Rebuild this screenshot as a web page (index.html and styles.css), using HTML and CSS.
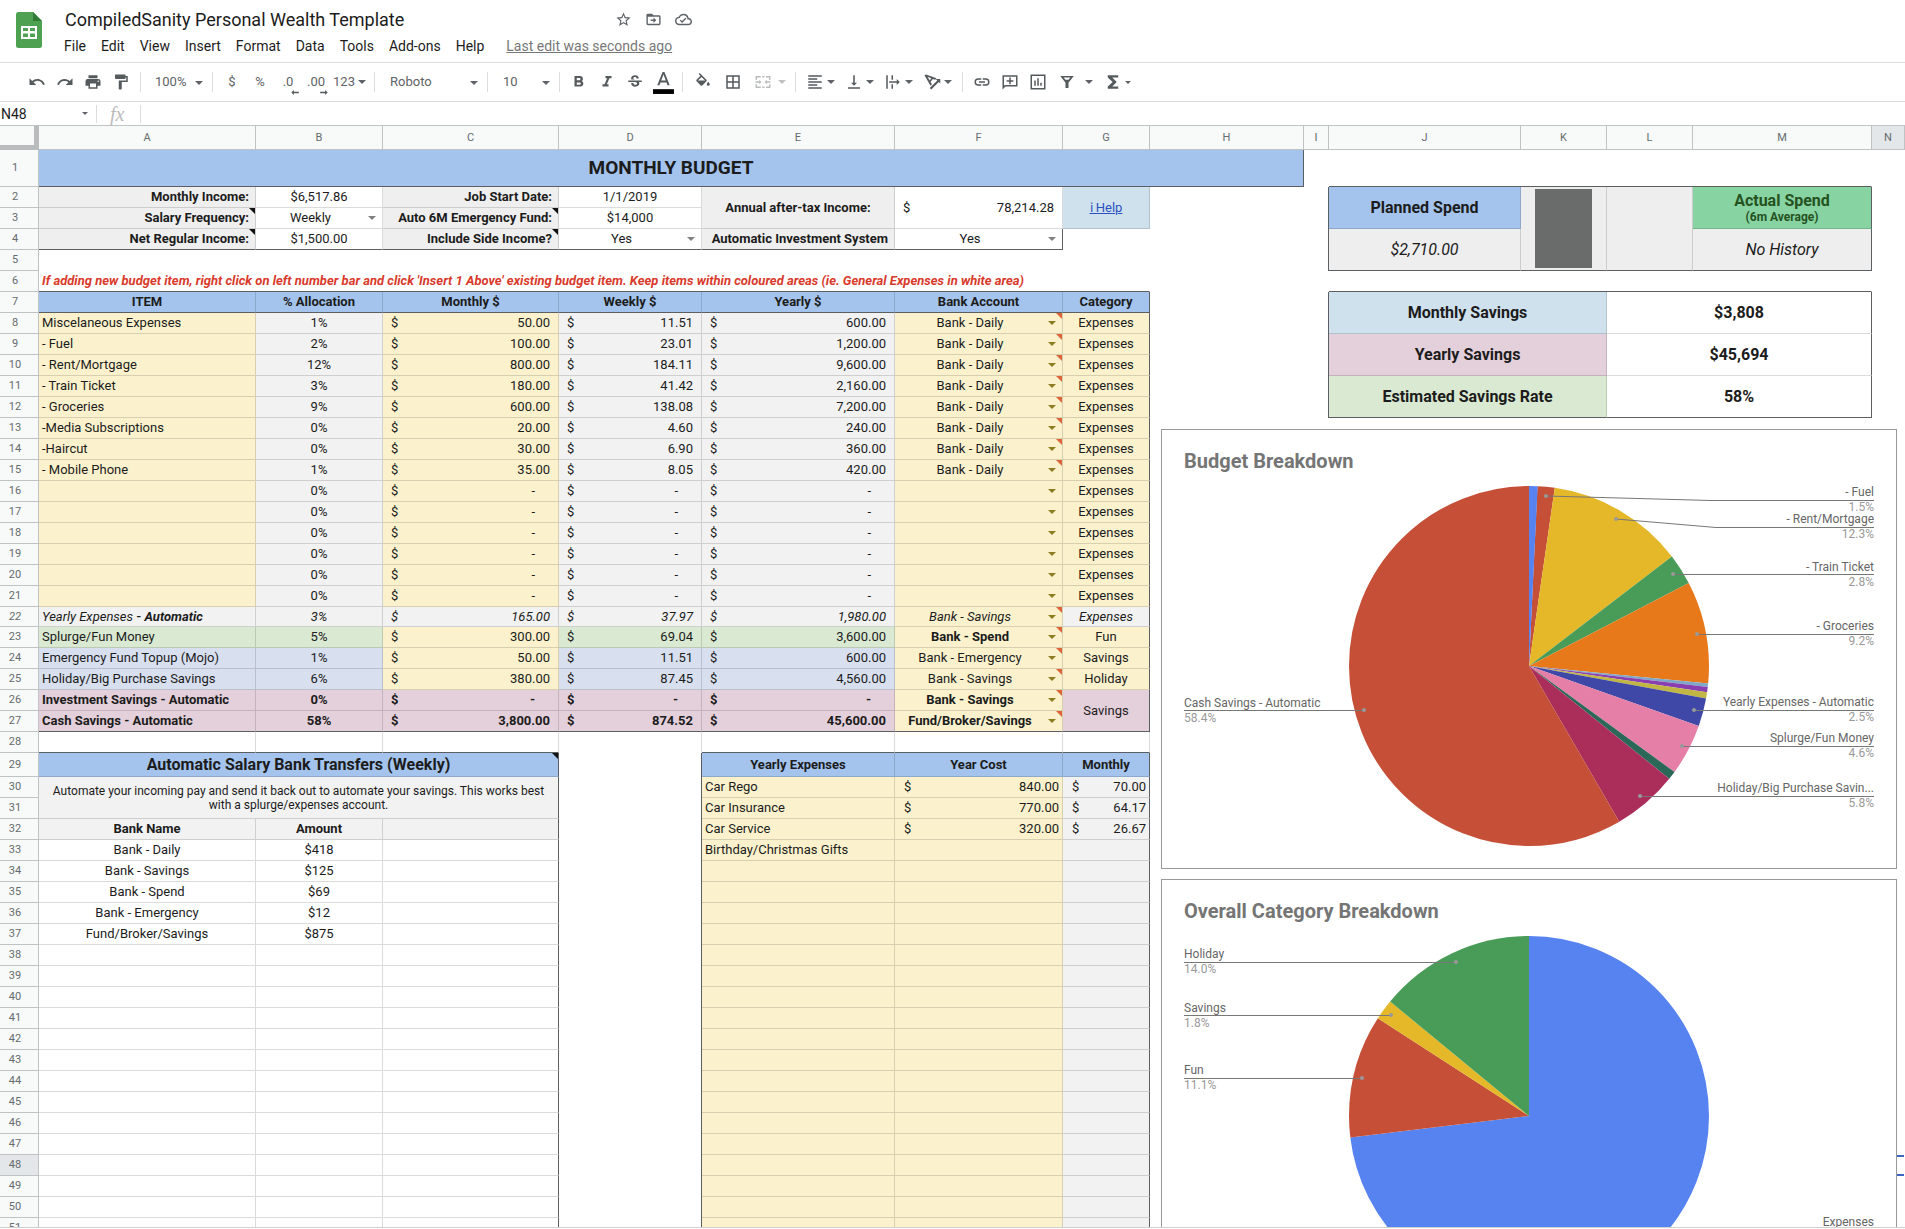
FILE: index.html
```html
<!DOCTYPE html>
<html lang="en">
<head>
<meta charset="utf-8">
<title>CompiledSanity Personal Wealth Template</title>
<link rel="stylesheet" href="styles.css">
</head>
<body>
<header class="top">
  <svg class="logo" viewBox="0 0 26 36" aria-hidden="true"><path fill="#4fa152" d="M2.500 0H17l9 9v24.500a2.500 2.500 0 0 1-2.500 2.500h-21A2.500 2.500 0 0 1 0 33.500v-31A2.500 2.500 0 0 1 2.500 0z"/><path fill="#2f7a35" d="M17 0l9 9h-9z"/><path fill="#fff" d="M5 14h16v13H5z"/><path fill="#4fa152" d="M7 16h5v3H7zM14 16h5v3h-5zM7 21.500h5v3.500H7zM14 21.500h5v3.500h-5z"/></svg>
  <div class="doc">
    <div class="title-row">
      <h1>CompiledSanity Personal Wealth Template</h1>
      <button aria-label="Star"><svg viewBox="0 0 24 24"><path d="M22 9.240l-7.190-.620L12 2 9.190 8.630 2 9.240l5.460 4.730L5.820 21 12 17.270 18.180 21l-1.630-7.030L22 9.240zM12 15.400l-3.760 2.270 1-4.280-3.320-2.880 4.380-.380L12 6.100l1.710 4.040 4.380.380-3.320 2.880 1 4.280L12 15.400z"/></svg></button>
      <button aria-label="Move"><svg viewBox="0 0 24 24"><path d="M20 6h-8l-2-2H4a2 2 0 0 0-2 2v12a2 2 0 0 0 2 2h16a2 2 0 0 0 2-2V8a2 2 0 0 0-2-2zm0 12H4V8h16v10zM12 17l4-4-4-4v3H8v2h4z"/></svg></button>
      <button aria-label="Saved to Drive"><svg viewBox="0 0 24 24"><path d="M19.350 10.040A7.490 7.490 0 0 0 12 4C9.110 4 6.600 5.640 5.350 8.040A5.994 5.994 0 0 0 0 14c0 3.310 2.690 6 6 6h13c2.760 0 5-2.240 5-5 0-2.640-2.050-4.780-4.650-4.960zM19 18H6c-2.210 0-4-1.790-4-4s1.790-4 4-4h.710A5.500 5.500 0 0 1 12 6c3.040 0 5.500 2.460 5.500 5.500v.500H19a3 3 0 0 1 0 6zm-9-3.800l-2-2L6.700 13.500 10 16.800l6-6-1.400-1.400z"/></svg></button>
    </div>
    <nav class="menu">
      <button>File</button><button>Edit</button><button>View</button><button>Insert</button><button>Format</button><button>Data</button><button>Tools</button><button>Add-ons</button><button>Help</button>
      <a href="#history">Last edit was seconds ago</a>
    </nav>
  </div>
</header>

<div class="toolbar" role="toolbar" aria-label="Formatting">
  <button aria-label="Undo"><svg viewBox="0 0 24 24"><path d="M12.500 8c-2.650 0-5.050 1-6.900 2.600L2 7v9h9l-3.620-3.620A7.950 7.950 0 0 1 20.100 16l2.370-.780C21.080 11.030 17.150 8 12.500 8z"/></svg></button>
  <button aria-label="Redo"><svg viewBox="0 0 24 24"><path d="M18.400 10.600A10.440 10.440 0 0 0 1.540 15.220L3.900 16a8 8 0 0 1 12.720-3.620L13 16h9V7l-3.600 3.600z"/></svg></button>
  <button aria-label="Print"><svg viewBox="0 0 24 24"><path d="M19 8H5a3 3 0 0 0-3 3v6h4v4h12v-4h4v-6a3 3 0 0 0-3-3zm-3 11H8v-5h8v5zm3-7a1 1 0 1 1 0-2 1 1 0 0 1 0 2zM18 3H6v4h12V3z"/></svg></button>
  <button aria-label="Paint format"><svg viewBox="0 0 24 24"><path d="M18 4V3a1 1 0 0 0-1-1H5a1 1 0 0 0-1 1v4a1 1 0 0 0 1 1h12a1 1 0 0 0 1-1V6h1v4H9v11a1 1 0 0 0 1 1h2a1 1 0 0 0 1-1v-9h8V4h-3z"/></svg></button>
  <i class="rule"></i>
  <label class="drop zoom"><select aria-label="Zoom"><option>100%</option></select></label>
  <i class="rule flush"></i>
  <button>$</button><button>%</button>
  <button class="dec">.0<svg viewBox="0 0 10 6"><path d="M3 0v2h6v2H3v2L0 3z"/></svg></button>
  <button class="dec">.00<svg viewBox="0 0 10 6"><path d="M7 0v2H1v2h6v2l3-3z"/></svg></button>
  <button class="combo">123<b class="caret"></b></button>
  <i class="rule"></i>
  <label class="drop face"><select aria-label="Font"><option>Roboto</option></select></label>
  <i class="rule none"></i>
  <label class="drop size"><select aria-label="Font size"><option>10</option></select></label>
  <i class="rule flush"></i>
  <button aria-label="Bold"><svg viewBox="0 0 24 24"><path d="M15.600 10.790c.970-.670 1.650-1.770 1.650-2.790 0-2.260-1.750-4-4-4H6v14h8.040c2.090 0 3.710-1.700 3.710-3.790 0-1.520-.860-2.820-2.150-3.420zM9 6.500h3.500a1.500 1.500 0 0 1 0 3H9v-3zm4 9H9v-3h4a1.500 1.500 0 0 1 0 3z"/></svg></button>
  <button aria-label="Italic"><svg viewBox="0 0 24 24"><path d="M10 4v3h2.210l-3.420 8H6v3h8v-3h-2.210l3.420-8H18V4z"/></svg></button>
  <button aria-label="Strikethrough"><svg viewBox="0 0 24 24"><path d="M7.240 8.750a3.500 3.500 0 0 1-.390-1.640C6.850 4.600 9.100 3 12.090 3c2.900 0 5 1.600 5 4.400h-3c0-1.200-.700-2-2.100-2-1.300 0-2.100.600-2.100 1.600 0 .8.600 1.300 1.900 1.750zM21 12v-2H3v2h9.620c1.500.600 2.100 1.100 2.100 2.100 0 1-.800 1.700-2.300 1.700-1.700 0-2.600-.800-2.600-2.400h-3c0 3.200 2.400 4.800 5.500 4.800 3.200 0 5.400-1.500 5.400-4.100 0-.8-.150-1.500-.500-2.100z"/></svg></button>
  <button aria-label="Text color"><svg class="tall" viewBox="0 0 22 24"><path d="M10 1L4.500 15h2.250l1.120-3h6.250l1.120 3h2.250L12 1h-2zm-1.380 9L11 3.670 13.380 10H8.620z"/><path fill="#000" d="M0 19h22v5H0z"/></svg></button>
  <i class="rule"></i>
  <button class="wide" aria-label="Fill color"><svg viewBox="0 0 24 24"><path d="M16.560 8.940L7.620 0 6.210 1.410l2.380 2.380-5.150 5.150a1.490 1.490 0 0 0 0 2.120l5.500 5.500c.590.590 1.540.590 2.120 0l5.500-5.500c.590-.580.590-1.530 0-2.120zM5.210 10L10 5.210 14.790 10zM19 11.500s-2 2.170-2 3.500a2 2 0 0 0 4 0c0-1.330-2-3.500-2-3.500z"/></svg></button>
  <button class="wide" aria-label="Borders"><svg viewBox="0 0 24 24"><path d="M3 3v18h18V3H3zm8 16H5v-6h6v6zm0-8H5V5h6v6zm8 8h-6v-6h6v6zm0-8h-6V5h6v6z"/></svg></button>
  <button class="wide off" aria-label="Merge cells" disabled><svg viewBox="0 0 24 24"><path d="M2 4h7v2H4v3H2zM11 4h3v2h-3zM16 4h6v5h-2V6h-4zM2 15h2v3h5v2H2zM11 18h3v2h-3zM20 15h2v5h-6v-2h4zM2 11h5V9l3 3-3 3v-2H2zM22 11h-5V9l-3 3 3 3v-2h5z"/></svg></button><b class="caret off"></b>
  <i class="rule gap"></i>
  <button class="combo" aria-label="Horizontal align"><svg viewBox="0 0 24 24"><path d="M15 15H3v2h12v-2zm0-8H3v2h12V7zM3 13h18v-2H3v2zm0 8h18v-2H3v2zM3 3v2h18V3H3z"/></svg><b class="caret"></b></button>
  <button class="combo" aria-label="Vertical align"><svg viewBox="0 0 24 24"><path d="M16 13h-3V3h-2v10H8l4 4 4-4zM4 19v2h16v-2H4z"/></svg><b class="caret"></b></button>
  <button class="combo" aria-label="Text wrapping"><svg viewBox="0 0 24 24"><path d="M3 3h2v18H3zM10 3h2v6h-2zM10 15h2v6h-2zM7 11h10V8l4 4-4 4v-3H7z"/></svg><b class="caret"></b></button>
  <button class="combo" aria-label="Text rotation"><svg viewBox="0 0 24 24"><path d="M2 3l2-1 14 5-2 2-3-1-3 4 2 3-2 2zm4 2l3 5 2-3zM9 20L19 10l-2-2h6v6l-2-2-10 10z"/></svg><b class="caret"></b></button>
  <i class="rule"></i>
  <button aria-label="Insert link"><svg viewBox="0 0 24 24"><path d="M3.900 12A3.100 3.100 0 0 1 7 8.900h4V7H7a5 5 0 0 0 0 10h4v-1.900H7A3.100 3.100 0 0 1 3.900 12zM8 13h8v-2H8v2zm9-6h-4v1.900h4a3.100 3.100 0 0 1 0 6.200h-4V17h4a5 5 0 0 0 0-10z"/></svg></button>
  <button aria-label="Insert comment"><svg viewBox="0 0 24 24"><path d="M22 3H2v19l4-4h16zm-2 13H5l-1 1V5h16zM11 6h2v3.500h3.500v2H13V15h-2v-3.500H7.500v-2H11z"/></svg></button>
  <button aria-label="Insert chart"><svg viewBox="0 0 24 24"><path d="M2 2v20h20V2zm18 18H4V4h16zM7 10h2v7H7zM11 7h2v10h-2zM15 13h2v4h-2z"/></svg></button>
  <button class="combo far" aria-label="Filter"><svg viewBox="0 0 24 24"><path d="M3 4h18l-7 9v7h-4v-7zm4.500 2l2.500 3h4l2.500-3z"/></svg><b class="caret"></b></button>
  <button class="combo" aria-label="Functions"><svg viewBox="0 0 24 24"><path d="M19 3H5v3l6.500 6L5 18v3h14v-3h-8l6-6-6-6h8z"/></svg><b class="caret small"></b></button>
</div>

<div class="formula">
  <input class="name" aria-label="Name box" value="N48"><b class="caret small"></b>
  <i class="rule flush"></i><span class="fx">fx</span><i class="rule flush"></i>
  <input class="entry" aria-label="Formula">
</div>

<main class="sheet">
<table class="grid">
<colgroup><col class="w-head"><col class="w-a"><col class="w-b"><col class="w-c"><col class="w-d"><col class="w-e"><col class="w-f"><col class="w-g"><col class="w-h"><col class="w-i"><col class="w-j"><col class="w-k"><col class="w-k"><col class="w-m"><col></colgroup>
<thead><tr><th class="corner"></th><th>A</th><th>B</th><th>C</th><th>D</th><th>E</th><th>F</th><th>G</th><th>H</th><th>I</th><th>J</th><th>K</th><th>L</th><th>M</th><th class="on">N</th></tr></thead>
<tbody>
<tr class="r1"><th>1</th><td colspan="8" class="head big db dr">MONTHLY BUDGET</td><td class="n"></td><td colspan="4" class="n db"></td><td class="n"></td></tr>
<tr><th>2</th><td class="lab">Monthly Income:</td><td>$6,517.86</td><td class="lab">Job Start Date:</td><td>1/1/2019</td><td rowspan="2" class="lab mid">Annual after-tax Income:</td><td rowspan="2" class="num"><span>$</span>78,214.28</td><td rowspan="2" class="sky"><a href="#help">ℹ Help</a></td><td colspan="2" class="n dr"></td><td rowspan="2" class="head stat">Planned Spend</td><td rowspan="4" class="ash db"><div class="bar"></div></td><td rowspan="4" class="ash db"></td><td rowspan="2" class="mint stat dr">Actual Spend<small>(6m Average)</small></td><td class="n"></td></tr>
<tr><th>3</th><td class="lab note">Salary Frequency:</td><td class="pick"><select aria-label="Salary frequency"><option>Weekly</option></select></td><td class="lab note">Auto 6M Emergency Fund:</td><td>$14,000</td><td colspan="2" class="n dr"></td><td class="n"></td></tr>
<tr><th>4</th><td class="lab note db">Net Regular Income:</td><td class="db">$1,500.00</td><td class="lab note db">Include Side Income?</td><td class="pick db"><select aria-label="Include side income"><option>Yes</option></select></td><td class="lab db">Automatic Investment System</td><td class="pick db dr"><select aria-label="Automatic investment system"><option>Yes</option></select></td><td class="n"></td><td colspan="2" class="n dr"></td><td rowspan="2" class="ash val db">$2,710.00</td><td rowspan="2" class="ash val db dr">No History</td><td class="n"></td></tr>
<tr><th>5</th><td colspan="7" class="n"></td><td colspan="2" class="n dr"></td><td class="n"></td></tr>
<tr><th>6</th><td colspan="7" class="n warn db">If adding new budget item, right click on left number bar and click 'Insert 1 Above' existing budget item. Keep items within coloured areas (ie. General Expenses in white area)</td><td colspan="2" class="n"></td><td colspan="4" class="n db"></td><td class="n"></td></tr>
<tr class="titles"><th>7</th><td>ITEM</td><td>% Allocation</td><td>Monthly $</td><td>Weekly $</td><td>Yearly $</td><td>Bank Account</td><td class="dr">Category</td><td colspan="2" class="n dr"></td><td colspan="2" rowspan="2" class="sky stat">Monthly Savings</td><td colspan="2" rowspan="2" class="stat dr">$3,808</td><td class="n"></td></tr>
<tr><th>8</th><td class="y l">Miscelaneous Expenses</td><td class="g">1%</td><td class="y num"><span>$</span>50.00</td><td class="g num"><span>$</span>11.51</td><td class="g num"><span>$</span>600.00</td><td class="y pick flag"><select aria-label="Bank account"><option>Bank - Daily</option></select></td><td class="y dr">Expenses</td><td colspan="2" class="n dr"></td><td class="n"></td></tr>
<tr><th>9</th><td class="y l">- Fuel</td><td class="g">2%</td><td class="y num"><span>$</span>100.00</td><td class="g num"><span>$</span>23.01</td><td class="g num"><span>$</span>1,200.00</td><td class="y pick flag"><select aria-label="Bank account"><option>Bank - Daily</option></select></td><td class="y dr">Expenses</td><td colspan="2" class="n dr"></td><td colspan="2" rowspan="2" class="pk stat">Yearly Savings</td><td colspan="2" rowspan="2" class="stat dr">$45,694</td><td class="n"></td></tr>
<tr><th>10</th><td class="y l">- Rent/Mortgage</td><td class="g">12%</td><td class="y num"><span>$</span>800.00</td><td class="g num"><span>$</span>184.11</td><td class="g num"><span>$</span>9,600.00</td><td class="y pick flag"><select aria-label="Bank account"><option>Bank - Daily</option></select></td><td class="y dr">Expenses</td><td colspan="2" class="n dr"></td><td class="n"></td></tr>
<tr><th>11</th><td class="y l">- Train Ticket</td><td class="g">3%</td><td class="y num"><span>$</span>180.00</td><td class="g num"><span>$</span>41.42</td><td class="g num"><span>$</span>2,160.00</td><td class="y pick flag"><select aria-label="Bank account"><option>Bank - Daily</option></select></td><td class="y dr">Expenses</td><td colspan="2" class="n dr"></td><td colspan="2" rowspan="2" class="gn stat db">Estimated Savings Rate</td><td colspan="2" rowspan="2" class="stat db dr">58%</td><td class="n"></td></tr>
<tr><th>12</th><td class="y l">- Groceries</td><td class="g">9%</td><td class="y num"><span>$</span>600.00</td><td class="g num"><span>$</span>138.08</td><td class="g num"><span>$</span>7,200.00</td><td class="y pick flag"><select aria-label="Bank account"><option>Bank - Daily</option></select></td><td class="y dr">Expenses</td><td colspan="2" class="n dr"></td><td class="n"></td></tr>
<tr><th>13</th><td class="y l">-Media Subscriptions</td><td class="g">0%</td><td class="y num"><span>$</span>20.00</td><td class="g num"><span>$</span>4.60</td><td class="g num"><span>$</span>240.00</td><td class="y pick flag"><select aria-label="Bank account"><option>Bank - Daily</option></select></td><td class="y dr">Expenses</td><td colspan="7" class="n"></td></tr>
<tr><th>14</th><td class="y l">-Haircut</td><td class="g">0%</td><td class="y num"><span>$</span>30.00</td><td class="g num"><span>$</span>6.90</td><td class="g num"><span>$</span>360.00</td><td class="y pick flag"><select aria-label="Bank account"><option>Bank - Daily</option></select></td><td class="y dr">Expenses</td><td colspan="7" class="n"></td></tr>
<tr><th>15</th><td class="y l">- Mobile Phone</td><td class="g">1%</td><td class="y num"><span>$</span>35.00</td><td class="g num"><span>$</span>8.05</td><td class="g num"><span>$</span>420.00</td><td class="y pick flag"><select aria-label="Bank account"><option>Bank - Daily</option></select></td><td class="y dr">Expenses</td><td colspan="7" class="n"></td></tr>
<tr><th>16</th><td class="y"></td><td class="g">0%</td><td class="y num nil"><span>$</span>-</td><td class="g num nil"><span>$</span>-</td><td class="g num nil"><span>$</span>-</td><td class="y pick"><select aria-label="Bank account"><option></option></select></td><td class="y dr">Expenses</td><td colspan="7" class="n"></td></tr>
<tr><th>17</th><td class="y"></td><td class="g">0%</td><td class="y num nil"><span>$</span>-</td><td class="g num nil"><span>$</span>-</td><td class="g num nil"><span>$</span>-</td><td class="y pick"><select aria-label="Bank account"><option></option></select></td><td class="y dr">Expenses</td><td colspan="7" class="n"></td></tr>
<tr><th>18</th><td class="y"></td><td class="g">0%</td><td class="y num nil"><span>$</span>-</td><td class="g num nil"><span>$</span>-</td><td class="g num nil"><span>$</span>-</td><td class="y pick"><select aria-label="Bank account"><option></option></select></td><td class="y dr">Expenses</td><td colspan="7" class="n"></td></tr>
<tr><th>19</th><td class="y"></td><td class="g">0%</td><td class="y num nil"><span>$</span>-</td><td class="g num nil"><span>$</span>-</td><td class="g num nil"><span>$</span>-</td><td class="y pick"><select aria-label="Bank account"><option></option></select></td><td class="y dr">Expenses</td><td colspan="7" class="n"></td></tr>
<tr><th>20</th><td class="y"></td><td class="g">0%</td><td class="y num nil"><span>$</span>-</td><td class="g num nil"><span>$</span>-</td><td class="g num nil"><span>$</span>-</td><td class="y pick"><select aria-label="Bank account"><option></option></select></td><td class="y dr">Expenses</td><td colspan="7" class="n"></td></tr>
<tr><th>21</th><td class="y"></td><td class="g">0%</td><td class="y num nil"><span>$</span>-</td><td class="g num nil"><span>$</span>-</td><td class="g num nil"><span>$</span>-</td><td class="y pick"><select aria-label="Bank account"><option></option></select></td><td class="y dr">Expenses</td><td colspan="7" class="n"></td></tr>
<tr class="r22"><th>22</th><td class="g l">Yearly Expenses <b>- Automatic</b></td><td class="g">3%</td><td class="g num"><span>$</span>165.00</td><td class="g num"><span>$</span>37.97</td><td class="g num"><span>$</span>1,980.00</td><td class="y pick flag"><select aria-label="Bank account"><option>Bank - Savings</option></select></td><td class="g dr">Expenses</td><td colspan="7" class="n"></td></tr>
<tr><th>23</th><td class="gn l">Splurge/Fun Money</td><td class="gn">5%</td><td class="y num"><span>$</span>300.00</td><td class="gn num"><span>$</span>69.04</td><td class="gn num"><span>$</span>3,600.00</td><td class="y pick flag bold"><select aria-label="Bank account"><option>Bank - Spend</option></select></td><td class="y dr">Fun</td><td colspan="7" class="n"></td></tr>
<tr><th>24</th><td class="bl l">Emergency Fund Topup (Mojo)</td><td class="bl">1%</td><td class="y num"><span>$</span>50.00</td><td class="bl num"><span>$</span>11.51</td><td class="bl num"><span>$</span>600.00</td><td class="y pick flag"><select aria-label="Bank account"><option>Bank - Emergency</option></select></td><td class="y dr">Savings</td><td colspan="7" class="n"></td></tr>
<tr><th>25</th><td class="bl l">Holiday/Big Purchase Savings</td><td class="bl">6%</td><td class="y num"><span>$</span>380.00</td><td class="bl num"><span>$</span>87.45</td><td class="bl num"><span>$</span>4,560.00</td><td class="y pick flag"><select aria-label="Bank account"><option>Bank - Savings</option></select></td><td class="y dr">Holiday</td><td colspan="7" class="n"></td></tr>
<tr><th>26</th><td class="pk l bold">Investment Savings - Automatic</td><td class="pk bold">0%</td><td class="pk num nil bold"><span>$</span>-</td><td class="pk num nil bold"><span>$</span>-</td><td class="pk num nil bold"><span>$</span>-</td><td class="y pick flag bold"><select aria-label="Bank account"><option>Bank - Savings</option></select></td><td rowspan="2" class="pk db dr">Savings</td><td colspan="7" class="n"></td></tr>
<tr><th>27</th><td class="pk l bold db">Cash Savings - Automatic</td><td class="pk bold db">58%</td><td class="pk num bold db"><span>$</span>3,800.00</td><td class="pk num bold db"><span>$</span>874.52</td><td class="pk num bold db"><span>$</span>45,600.00</td><td class="y pick flag bold db"><select aria-label="Bank account"><option>Fund/Broker/Savings</option></select></td><td colspan="7" class="n"></td></tr>
<tr><th>28</th><td class="db"></td><td class="db"></td><td class="db"></td><td class="open"></td><td class="db"></td><td class="db"></td><td class="db"></td><td colspan="7" class="n"></td></tr>
<tr class="r29"><th>29</th><td colspan="3" class="head note stat dr">Automatic Salary Bank Transfers (Weekly)</td><td class="n dr"></td><td class="head">Yearly Expenses</td><td class="head">Year Cost</td><td class="head dr">Monthly</td><td colspan="7" class="n"></td></tr>
<tr><th>30</th><td colspan="3" rowspan="2" class="g dr info">Automate your incoming pay and send it back out to automate your savings. This works best with a splurge/expenses account.</td><td class="n dr"></td><td class="y l">Car Rego</td><td class="y num sum"><span>$</span>840.00</td><td class="g num sum dr"><span>$</span>70.00</td><td colspan="7" class="n"></td></tr>
<tr><th>31</th><td class="n dr"></td><td class="y l">Car Insurance</td><td class="y num sum"><span>$</span>770.00</td><td class="g num sum dr"><span>$</span>64.17</td><td colspan="7" class="n"></td></tr>
<tr><th>32</th><td class="g bold">Bank Name</td><td class="g bold">Amount</td><td class="g dr"></td><td class="n dr"></td><td class="y l">Car Service</td><td class="y num sum"><span>$</span>320.00</td><td class="g num sum dr"><span>$</span>26.67</td><td colspan="7" class="n"></td></tr>
<tr><th>33</th><td>Bank - Daily</td><td>$418</td><td class="dr"></td><td class="n dr"></td><td class="y l">Birthday/Christmas Gifts</td><td class="y"></td><td class="g dr"></td><td colspan="7" class="n"></td></tr>
<tr><th>34</th><td>Bank - Savings</td><td>$125</td><td class="dr"></td><td class="n dr"></td><td class="y"></td><td class="y"></td><td class="g dr"></td><td colspan="7" class="n"></td></tr>
<tr><th>35</th><td>Bank - Spend</td><td>$69</td><td class="dr"></td><td class="n dr"></td><td class="y"></td><td class="y"></td><td class="g dr"></td><td colspan="7" class="n"></td></tr>
<tr><th>36</th><td>Bank - Emergency</td><td>$12</td><td class="dr"></td><td class="n dr"></td><td class="y"></td><td class="y"></td><td class="g dr"></td><td colspan="7" class="n"></td></tr>
<tr><th>37</th><td>Fund/Broker/Savings</td><td>$875</td><td class="dr"></td><td class="n dr"></td><td class="y"></td><td class="y"></td><td class="g dr"></td><td colspan="7" class="n"></td></tr>
<tr><th>38</th><td></td><td></td><td class="dr"></td><td class="n dr"></td><td class="y"></td><td class="y"></td><td class="g dr"></td><td colspan="7" class="n"></td></tr>
<tr><th>39</th><td></td><td></td><td class="dr"></td><td class="n dr"></td><td class="y"></td><td class="y"></td><td class="g dr"></td><td colspan="7" class="n"></td></tr>
<tr><th>40</th><td></td><td></td><td class="dr"></td><td class="n dr"></td><td class="y"></td><td class="y"></td><td class="g dr"></td><td colspan="7" class="n"></td></tr>
<tr><th>41</th><td></td><td></td><td class="dr"></td><td class="n dr"></td><td class="y"></td><td class="y"></td><td class="g dr"></td><td colspan="7" class="n"></td></tr>
<tr><th>42</th><td></td><td></td><td class="dr"></td><td class="n dr"></td><td class="y"></td><td class="y"></td><td class="g dr"></td><td colspan="7" class="n"></td></tr>
<tr><th>43</th><td></td><td></td><td class="dr"></td><td class="n dr"></td><td class="y"></td><td class="y"></td><td class="g dr"></td><td colspan="7" class="n"></td></tr>
<tr><th>44</th><td></td><td></td><td class="dr"></td><td class="n dr"></td><td class="y"></td><td class="y"></td><td class="g dr"></td><td colspan="7" class="n"></td></tr>
<tr><th>45</th><td></td><td></td><td class="dr"></td><td class="n dr"></td><td class="y"></td><td class="y"></td><td class="g dr"></td><td colspan="7" class="n"></td></tr>
<tr><th>46</th><td></td><td></td><td class="dr"></td><td class="n dr"></td><td class="y"></td><td class="y"></td><td class="g dr"></td><td colspan="7" class="n"></td></tr>
<tr><th>47</th><td></td><td></td><td class="dr"></td><td class="n dr"></td><td class="y"></td><td class="y"></td><td class="g dr"></td><td colspan="7" class="n"></td></tr>
<tr><th class="on">48</th><td></td><td></td><td class="dr"></td><td class="n dr"></td><td class="y"></td><td class="y"></td><td class="g dr"></td><td colspan="6" class="n"></td><td class="n active"></td></tr>
<tr><th>49</th><td></td><td></td><td class="dr"></td><td class="n dr"></td><td class="y"></td><td class="y"></td><td class="g dr"></td><td colspan="7" class="n"></td></tr>
<tr><th>50</th><td></td><td></td><td class="dr"></td><td class="n dr"></td><td class="y"></td><td class="y"></td><td class="g dr"></td><td colspan="7" class="n"></td></tr>
<tr><th>51</th><td></td><td></td><td class="dr"></td><td class="n dr"></td><td class="y"></td><td class="y"></td><td class="g dr"></td><td colspan="7" class="n"></td></tr>
</tbody>
</table>

<svg class="chart budget" viewBox="0 0 736 440" role="img" aria-label="Budget Breakdown">
  <rect class="frame" x="0.500" y="0.500" width="735" height="439"/>
  <text class="name" x="23" y="39">Budget Breakdown</text>
  <g class="pie" transform="translate(368 237) rotate(-90)">
    <circle r="90" pathLength="6510" stroke="#c54f37" stroke-dasharray="100 6410" stroke-dashoffset="-50"/>
    <circle r="90" pathLength="6510" stroke="#e5b829" stroke-dasharray="800 5710" stroke-dashoffset="-150"/>
    <circle r="90" pathLength="6510" stroke="#489c58" stroke-dasharray="180 6330" stroke-dashoffset="-950"/>
    <circle r="90" pathLength="6510" stroke="#e8791b" stroke-dasharray="600 5910" stroke-dashoffset="-1130"/>
    <circle r="90" pathLength="6510" stroke="#7fa8c8" stroke-dasharray="20 6490" stroke-dashoffset="-1730"/>
    <circle r="90" pathLength="6510" stroke="#8a3fb0" stroke-dasharray="30 6480" stroke-dashoffset="-1750"/>
    <circle r="90" pathLength="6510" stroke="#c1b543" stroke-dasharray="35 6475" stroke-dashoffset="-1780"/>
    <circle r="90" pathLength="6510" stroke="#3f48a6" stroke-dasharray="165 6345" stroke-dashoffset="-1815"/>
    <circle r="90" pathLength="6510" stroke="#e57fa8" stroke-dasharray="300 6210" stroke-dashoffset="-1980"/>
    <circle r="90" pathLength="6510" stroke="#2c6857" stroke-dasharray="50 6460" stroke-dashoffset="-2280"/>
    <circle r="90" pathLength="6510" stroke="#ab2d59" stroke-dasharray="380 6130" stroke-dashoffset="-2330"/>
    <circle r="90" pathLength="6510" stroke="#c54f37" stroke-dasharray="3800 2710" stroke-dashoffset="-2710"/>
    <path class="sliver" d="M0 0H180A180 180 0 0 1 179.790 8.680Z"/>
  </g>
  <g class="lead"><path d="M385 67L550 71.500H713M455 90L555 98.500H713M512 145.500H713M536 205.500H713M533 281.500H713M521 317.500H713M479 367.500H713M23 281.500H203"/></g>
  <g class="dots"><circle cx="385" cy="67" r="2"/><circle cx="455" cy="90" r="2"/><circle cx="512" cy="145" r="2"/><circle cx="536" cy="205" r="2"/><circle cx="533" cy="281" r="2"/><circle cx="521" cy="317" r="2"/><circle cx="479" cy="367" r="2"/><circle cx="203" cy="281" r="2"/></g>
  <g class="right"><text x="713" y="67">- Fuel</text><text x="713" y="94">- Rent/Mortgage</text><text x="713" y="142">- Train Ticket</text><text x="713" y="201">- Groceries</text><text x="713" y="277">Yearly Expenses - Automatic</text><text x="713" y="313">Splurge/Fun Money</text><text x="713" y="363">Holiday/Big Purchase Savin...</text></g>
  <g class="right pct"><text x="713" y="82">1.5%</text><text x="713" y="109">12.3%</text><text x="713" y="157">2.8%</text><text x="713" y="216">9.2%</text><text x="713" y="292">2.5%</text><text x="713" y="328">4.6%</text><text x="713" y="378">5.8%</text></g>
  <text x="23" y="278">Cash Savings - Automatic</text><text class="pct" x="23" y="293">58.4%</text>
</svg>

<svg class="chart category" viewBox="0 0 736 440" role="img" aria-label="Overall Category Breakdown">
  <rect class="frame" x="0.500" y="0.500" width="735" height="439"/>
  <text class="name" x="23" y="39">Overall Category Breakdown</text>
  <g class="pie" transform="translate(368 237) rotate(-90)">
    <circle r="90" pathLength="2710" stroke="#5783f0" stroke-dasharray="1980 730"/>
    <circle r="90" pathLength="2710" stroke="#c54f37" stroke-dasharray="300 2410" stroke-dashoffset="-1980"/>
    <circle r="90" pathLength="2710" stroke="#e5b829" stroke-dasharray="50 2660" stroke-dashoffset="-2280"/>
    <circle r="90" pathLength="2710" stroke="#489c58" stroke-dasharray="380 2330" stroke-dashoffset="-2330"/>
  </g>
  <g class="lead"><path d="M23 83.500H295M23 136.500H230M23 199.500H201M535 351.500H713"/></g>
  <g class="dots"><circle cx="295" cy="83" r="2"/><circle cx="230" cy="136" r="2"/><circle cx="201" cy="199" r="2"/></g>
  <text x="23" y="79">Holiday</text><text x="23" y="133">Savings</text><text x="23" y="195">Fun</text>
  <g class="pct"><text x="23" y="94">14.0%</text><text x="23" y="148">1.8%</text><text x="23" y="210">11.1%</text></g>
  <g class="right"><text x="713" y="347">Expenses</text></g>
</svg>
</main>
</body>
</html>
```
FILE: styles.css
```css
* { box-sizing: border-box; }

body {
  margin: 0;
  height: 100vh;
  display: flex;
  flex-direction: column;
  overflow: hidden;
  background: #fff;
  color: #1c1c1c;
  font: 14px/16px Roboto, "Liberation Sans", sans-serif;
}

button, select, input {
  font: inherit;
  color: inherit;
  background: none;
  border: 0;
  padding: 0;
  margin: 0;
}

select { appearance: none; }

/* Document header */
.top {
  display: flex;
  height: 63px;
  padding-left: 16px;
  gap: 22px;
  border-bottom: 1px solid #dadce0;
  flex: none;
}
.logo { width: 26px; height: 36px; margin-top: 12px; }
.title-row { display: flex; align-items: center; height: 36px; padding-top: 3px; }
h1 {
  margin: 0;
  min-width: 544px;
  font-size: 18px;
  font-weight: 400;
  line-height: 24px;
  padding-left: 1px;
}
.title-row button { width: 30px; height: 20px; display: grid; place-items: center; }
.title-row svg { width: 17px; height: 17px; fill: #5f6368; }
.menu { display: flex; gap: 15px; align-items: center; height: 20px; }
.menu a { margin-left: 7px; color: #777; }

/* Toolbar */
.toolbar {
  display: flex;
  align-items: center;
  height: 39px;
  padding-left: 23px;
  border-bottom: 1px solid #dadce0;
  flex: none;
  font-size: 13px;
  color: #5f6368;
}
.toolbar button {
  width: 28px;
  height: 28px;
  display: flex;
  align-items: center;
  justify-content: center;
  position: relative;
}
.toolbar svg { width: 18px; height: 18px; fill: #555a5c; flex: none; }
.toolbar .tall { width: 21px; height: 23px; }
.toolbar .wide { width: 30px; }
.toolbar .combo { width: 39px; gap: 3px; }
.toolbar .far { width: 46px; gap: 9px; }
.toolbar .dec svg { position: absolute; width: 9px; height: 5px; right: 2px; bottom: 1px; }
.off { opacity: .4; }

.rule { width: 1px; height: 20px; background: #dadce0; margin: 0 5px; flex: none; }
.rule.flush { margin-left: 0; }
.rule.none { margin: 0; }
.rule.gap { margin-left: 9px; }

.caret {
  width: 0;
  border: 4px solid transparent;
  border-top-color: #5f6368;
  border-bottom: 0;
  flex: none;
}
.caret.small { border-width: 3px 3px 0; }

.drop { position: relative; display: flex; align-items: center; height: 24px; }
.drop select { width: 100%; }
.drop::after {
  content: "";
  position: absolute;
  right: 9px;
  top: 11px;
  border: 4px solid transparent;
  border-top-color: #5f6368;
  border-bottom: 0;
}
.zoom { width: 66px; padding-left: 9px; }
.face { width: 107px; padding-left: 10px; }
.size { width: 71px; padding-left: 15px; }

/* Formula bar */
.formula {
  display: flex;
  align-items: center;
  height: 24px;
  border-bottom: 1px solid #c0c4c6;
  flex: none;
}
.formula .name { width: 82px; padding-left: 1px; }
.formula .caret { margin-right: 8px; }
.formula .rule { height: 18px; }
.fx { width: 38px; padding-left: 8px; font: italic 20px/20px "Liberation Serif", serif; color: #bbb; }
.entry { flex: 1; }

/* Sheet */
.sheet {
  position: relative;
  flex: 1;
  min-height: 0;
  margin-bottom: 1px;
  overflow: auto;
  scrollbar-width: none;
  border-bottom: 1px solid #d0d0d0;
}
.grid {
  width: 100%;
  table-layout: fixed;
  border-collapse: separate;
  border-spacing: 0;
  font-size: 13px;
}
.w-head { width: 39px; }
.w-a { width: 217px; }
.w-b { width: 127px; }
.w-c { width: 176px; }
.w-d { width: 143px; }
.w-e { width: 193px; }
.w-f { width: 168px; }
.w-g { width: 87px; }
.w-h { width: 154px; }
.w-i { width: 25px; }
.w-j { width: 192px; }
.w-k { width: 86px; }
.w-m { width: 179px; }

tr { height: 21px; }
thead tr { height: 24px; }
.r1 { height: 37px; }
.r22 { height: 20px; font-style: italic; }
.r29 { height: 24px; }

th, td {
  padding: 0;
  border: 0 solid rgba(0, 0, 0, .14);
  border-width: 0 1px 1px 0;
  text-align: center;
  white-space: nowrap;
}
th {
  background: #f7faf9;
  border-color: #bfc3c4;
  color: #666b6e;
  font-size: 11px;
  font-weight: 400;
}
tbody th { padding-right: 8px; }
.on { background: #e4e7ea; }
.corner { border: solid #b9bcbd; border-width: 0 5px 5px 0; }

td { position: relative; }
.n { border-color: transparent; border-bottom-width: 0; }
.open { border-bottom-width: 0; }
.db { border-bottom: 1px solid #5c5f61; }
.dr { border-right-color: #5c5f61; }

.head, .titles td:not(.n, .stat) { background: #a4c4ed; font-weight: 700; }
.titles td:not(.n, .stat) { border-bottom-color: #5c5f61; }
.y { background: #fbf2cd; }
.g { background: #f2f2f2; }
.gn { background: #dae9d2; }
.bl { background: #d8dfef; }
.pk { background: #e4d0db; }
.sky { background: #d0e1ee; }
.ash { background: #eee; }
.mint { background: #87d3a2; color: #25521e; }

.l { text-align: left; padding-left: 3px; }
.bold { font-weight: 700; }
.big { font-size: 19px; }
.stat { font-size: 16px; font-weight: 700; line-height: 18px; }
.stat small { display: block; font-size: 12px; line-height: 14px; }
.val { font-size: 16px; font-style: italic; }
.warn { text-align: left; padding-left: 3px; font-weight: 700; font-style: italic; color: #d93a2b; }
.info { white-space: normal; padding: 0 8px; font-size: 12px; line-height: 14px; }
.lab { background: #efefef; font-weight: 700; text-align: right; padding-right: 6px; }
.lab.mid { text-align: center; padding: 0; }
td a { color: #2b50c0; }

.num { text-align: right; padding: 0 8px; }
.num span { float: left; }
.nil { padding-right: 23px; }
.sum { padding: 0 3px 0 9px; }
.bar { width: 57px; height: 79px; margin: 0 auto; background: #696c6b; }

.pick select {
  display: block;
  width: 100%;
  height: 18px;
  padding-right: 17px;
  text-align: center;
  text-align-last: center;
}
.pick::after {
  content: "";
  position: absolute;
  right: 6px;
  top: 8px;
  border: 4px solid transparent;
  border-top-color: #808080;
  border-bottom: 0;
}
.pick.y::after { border-top-color: #8a7d22; }
.note::before, .flag::before {
  content: "";
  position: absolute;
  right: 0;
  top: 0;
  border-left: 6px solid transparent;
  border-top: 6px solid #111;
}
.flag::before { border-top-color: #dc6438; }
.active { box-shadow: inset 0 2px #3f66c4, inset 0 -2px #3f66c4; }

/* Charts float over the grid */
.chart {
  position: absolute;
  left: 1161px;
  width: 736px;
  height: 440px;
  background: #fff;
  font-size: 12px;
  fill: #666;
}
.budget { top: 303px; }
.category { top: 753px; }
.chart .name { font-size: 20px; font-weight: 700; fill: #757575; }
.frame { fill: none; stroke: #999; }
.pie { fill: none; stroke-width: 180px; }
.sliver { fill: #5783f0; stroke: none; }
.lead { fill: none; stroke: #777; }
.dots { fill: #999; }
.right { text-anchor: end; }
.pct { fill: #999; }
```
